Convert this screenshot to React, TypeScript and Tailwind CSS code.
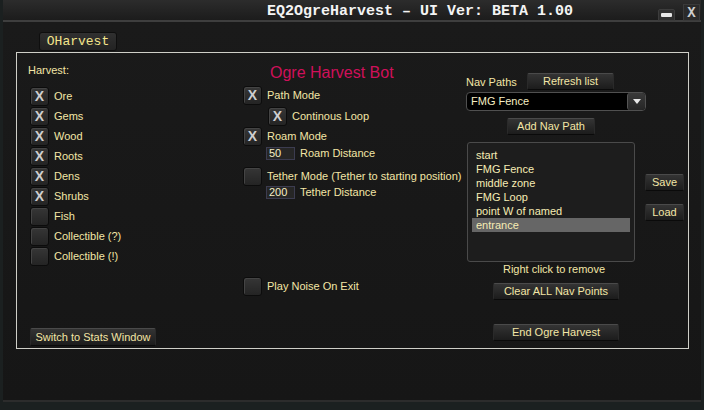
const sans = "font-['Liberation_Sans',Arial,sans-serif]";
const mono = "font-['Liberation_Mono','Courier_New',monospace]";

function Check({ on }: { on?: boolean }) {
  return (
    <div className="w-[19px] h-[19px] shrink-0 rounded-[3px] border border-[#0c0c0c] bg-gradient-to-b from-[#363636] to-[#242424] shadow-[inset_1px_1px_0_#444] flex items-center justify-center">
      {on && (
        <span className={`${sans} text-[14px] leading-none font-bold text-[#cfcfcf]`}>X</span>
      )}
    </div>
  );
}

function Btn({ label, className }: { label: string; className: string }) {
  return (
    <div
      className={`${sans} text-[11px] text-[#f3e6a6] flex items-center justify-center rounded-[2px] border-t border-[#4a4a4a] border-x border-x-[#2a2a2a] border-b border-b-[#0a0a0a] bg-gradient-to-b from-[#343434] to-[#1c1c1c] ${className}`}
    >
      {label}
    </div>
  );
}

function Row({ on, label }: { on?: boolean; label: string }) {
  return (
    <div className="h-[20px] flex items-center gap-[5px]">
      <Check on={on} />
      <span className={`${sans} text-[11px] text-[#f3e6a6]`}>{label}</span>
    </div>
  );
}

function Num({ v, label }: { v: string; label: string }) {
  return (
    <div className="h-[13px] flex items-center gap-[5px] ml-[23px]">
      <div className={`${sans} w-[29px] h-[13px] bg-[#262626] border border-[#3c3c50] text-[11px] leading-[11px] text-[#f6eec4] pl-[2px]`}>
        {v}
      </div>
      <span className={`${sans} text-[11px] leading-[13px] text-[#f3e6a6]`}>{label}</span>
    </div>
  );
}

export default function App() {
  const points = ["start", "FMG Fence", "middle zone", "FMG Loop", "point W of named", "entrance"];
  return (
    <div className="w-[704px] h-[410px] bg-[#1b2020] overflow-hidden">
      <div className="ml-[3px] w-[698px] h-[402px] bg-[#171717] border-b-2 border-[#2c2c2c] flex flex-col">
        {/* title bar */}
        <div className="h-[20px] bg-gradient-to-b from-[#2c2c2c] to-[#1c1c1c] flex items-center pt-[2px] relative">
          <span className={`${mono} font-bold text-[15px] leading-none text-[#f4f4f4] ml-[264px]`}>
            EQ2OgreHarvest – UI Ver: BETA 1.00
          </span>
          <div className="absolute left-[655px] top-[9px] w-[17px] h-[12px] rounded-t-[2px] bg-[#2e2e2e] border border-[#3c3c3c] flex items-center justify-center">
            <div className="w-[11px] h-[4px] rounded-[1px] bg-[#e6e6e6]" />
          </div>
          <div className="absolute left-[680px] top-[4px] w-[17px] h-[17px] bg-[#2a2a2a] border border-[#3a3a3a] flex items-center justify-center">
            <span className={`${mono} font-bold text-[14px] text-[#cfcfcf] leading-none`}>X</span>
          </div>
        </div>
        <div className="h-[2px] bg-[#3e3e3e]" />
        <div className="flex-1 bg-gradient-to-b from-[#1a1a1a] to-[#161616]">
          {/* tab */}
          <div className={`${mono} mt-[10px] ml-[36px] w-[78px] h-[19px] rounded-[3px] border border-[#0e0e0e] bg-gradient-to-b from-[#303030] to-[#232323] text-[13px] text-[#f4e68c] flex items-center justify-center`}>
            OHarvest
          </div>
          {/* panel */}
          <div className="mt-[1px] ml-[13px] w-[673px] h-[297px] border border-[#cfcfc8] grid grid-cols-[226px_223px_1fr]">
            {/* left */}
            <div className="flex flex-col pl-[13px] pt-[11px] pb-[2px]">
              <span className={`${sans} text-[11px] leading-[13px] text-[#f3e6a6] -ml-[2px]`}>Harvest:</span>
              <div className="mt-[9px] flex flex-col">
                <Row on label="Ore" />
                <Row on label="Gems" />
                <Row on label="Wood" />
                <Row on label="Roots" />
                <Row on label="Dens" />
                <Row on label="Shrubs" />
                <Row label="Fish" />
                <Row label="Collectible (?)" />
                <Row label="Collectible (!)" />
              </div>
              <Btn label="Switch to Stats Window" className="mt-auto w-[126px] h-[18px]" />
            </div>
            {/* middle */}
            <div className="flex flex-col pt-[11px]">
              <span className={`${sans} text-[16px] leading-[18px] text-[#d0105a] ml-[27px]`}>Ogre Harvest Bot</span>
              <div className="mt-[3px]">
                <Row on label="Path Mode" />
              </div>
              <div className="ml-[25px] mt-[1px]">
                <Row on label="Continous Loop" />
              </div>
              <Row on label="Roam Mode" />
              <div className="mt-[1px]">
                <Num v="50" label="Roam Distance" />
              </div>
              <div className="mt-[6px]">
                <Row label="Tether Mode (Tether to starting position)" />
              </div>
              <Num v="200" label="Tether Distance" />
              <div className="mt-[77px]">
                <Row label="Play Noise On Exit" />
              </div>
            </div>
            {/* right */}
            <div className="flex flex-col pt-[20px]">
              <div className="flex items-end">
                <span className={`${sans} text-[11px] text-[#f3e6a6] w-[61px] leading-[13px] mb-[1px]`}>Nav Paths</span>
                <Btn label="Refresh list" className="w-[87px] h-[17px]" />
              </div>
              <div className="mt-[2px] w-[180px] h-[19px] rounded-[4px] border border-[#505050] bg-black flex items-center">
                <span className={`${sans} text-[11px] text-[#f6eec4] pl-[4px] flex-1`}>FMG Fence</span>
                <div className="w-[18px] h-[17px] rounded-[3px] border-l border-[#555] bg-gradient-to-b from-[#3a3a3a] to-[#262626] flex items-center justify-center">
                  <svg width="8" height="5" viewBox="0 0 8 5">
                    <path d="M0 0 L8 0 L4 5 Z" fill="#e8e8e8" />
                  </svg>
                </div>
              </div>
              <Btn label="Add Nav Path" className="mt-[7px] ml-[41px] w-[88px] h-[17px]" />
              <div className="mt-[7px] flex items-start">
                <div className="w-[168px] h-[120px] ml-[1px] rounded-[3px] border border-[#4a4a4a] bg-[#1d1d1d] pt-[5px] px-[4px]">
                  {points.map((p, i) => (
                    <div
                      key={p}
                      className={`${sans} h-[14px] flex items-center text-[11px] text-[#f6ecb4] pl-[4px] ${i === 5 ? "bg-[#666666] w-[158px]" : ""}`}
                    >
                      {p}
                    </div>
                  ))}
                </div>
                <div className="ml-[10px] flex flex-col mt-[32px]">
                  <Btn label="Save" className="w-[39px] h-[17px]" />
                  <Btn label="Load" className="mt-[13px] w-[39px] h-[17px]" />
                </div>
              </div>
              <span className={`${sans} text-[11px] text-[#f3e6a6] mt-[1px] w-[176px] text-center leading-[13px]`}>
                Right click to remove
              </span>
              <Btn label="Clear ALL Nav Points" className="mt-[7px] ml-[27px] w-[126px] h-[17px]" />
              <Btn label="End Ogre Harvest" className="mt-[24px] ml-[27px] w-[126px] h-[17px]" />
            </div>
          </div>
        </div>
      </div>
    </div>
  );
}
